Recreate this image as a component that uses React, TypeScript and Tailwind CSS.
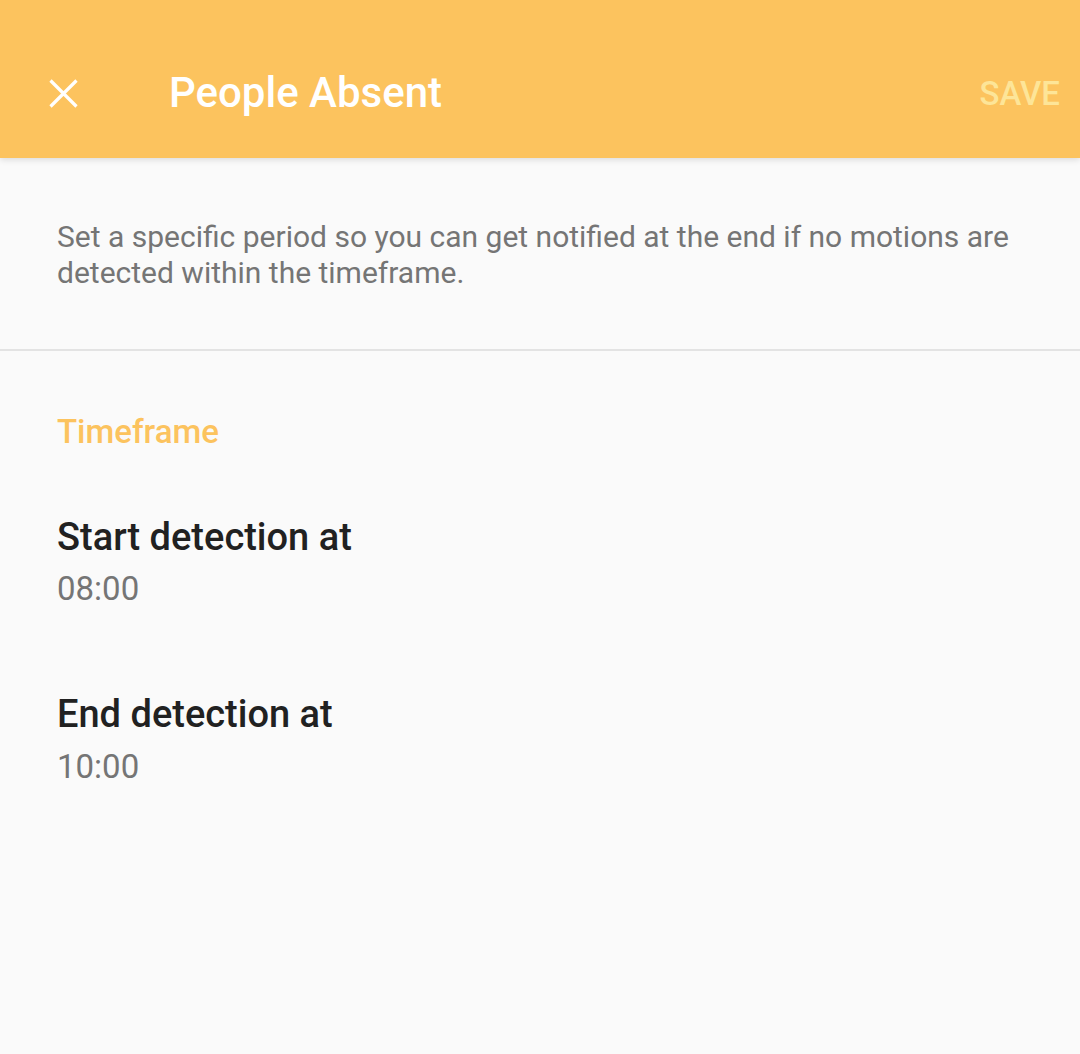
export default function App() {
  return (
    <div className="min-h-[1054px] w-full bg-[#fafafa] font-['Roboto',sans-serif]">
      <header className="relative z-10 h-[158px] bg-[#fcc35e] pt-[29px] shadow-[0_2px_6px_rgba(0,0,0,0.12)]">
        <div className="flex h-[128px] items-center">
          <button className="flex h-[128px] w-[128px] items-center justify-center pr-[1px]">
            <svg width="29" height="29" viewBox="0 0 29 29" fill="none">
              <path d="M1.5 1.5 L27.5 27.5 M27.5 1.5 L1.5 27.5" stroke="#fff" strokeWidth="3.2" />
            </svg>
          </button>
          <h1 className="ml-[41px] text-[42px] font-medium leading-none text-white">
            People Absent
          </h1>
          <span className="ml-auto mr-[20px] text-[33px] font-medium leading-none text-[#fde598]">
            SAVE
          </span>
        </div>
      </header>

      <div className="px-[57px] pb-[58px] pt-[61px]">
        <p className="text-[30px] leading-[36px] text-[#757575]">
          Set a specific period so you can get notified at the end if no motions are
          detected within the timeframe.
        </p>
      </div>
      <div className="h-[2px] bg-[#e3e3e3]" />

      <section className="px-[57px] pt-[61px]">
        <h2 className="text-[33px] font-medium leading-[40px] text-[#fcc35e]">Timeframe</h2>

        <div className="mt-[62px]">
          <div className="text-[38px] font-medium leading-[46px] text-[#212121]">
            Start detection at
          </div>
          <div className="mt-[9px] text-[33px] leading-[40px] text-[#757575]">08:00</div>
        </div>

        <div className="mt-[82px]">
          <div className="text-[38px] font-medium leading-[46px] text-[#212121]">
            End detection at
          </div>
          <div className="mt-[10px] text-[33px] leading-[40px] text-[#757575]">10:00</div>
        </div>
      </section>
    </div>
  );
}
